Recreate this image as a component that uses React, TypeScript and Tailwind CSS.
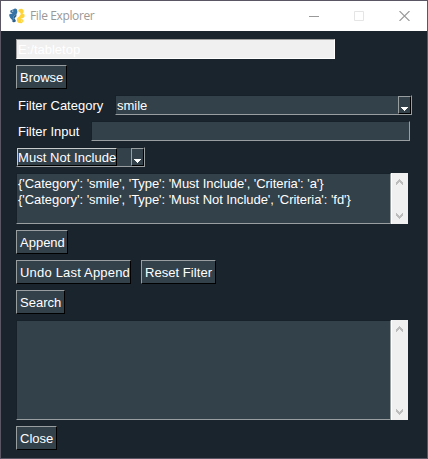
import type { ReactNode } from "react";

const sunken = "border border-t-[#17212a] border-l-[#17212a] border-r-[#999ea1] border-b-[#999ea1] bg-[#33414b]";

function Button({ children, width }: { children: ReactNode; width: string }) {
  return (
    <button
      className={`flex h-6 shrink-0 items-start whitespace-nowrap border border-t-[#999ea1] border-l-[#999ea1] border-r-black border-b-black bg-[#33414b] pl-[3px] text-left leading-[23px] ${width}`}
    >
      {children}
    </button>
  );
}

function DropArrow() {
  return (
    <span className="ml-auto flex h-[18px] w-[13px] shrink-0 items-end justify-center border border-t-[#999ea1] border-l-[#999ea1] border-r-black border-b-black bg-[#33414b] pb-[2px]">
      <svg width="7" height="4" viewBox="0 0 7 4" shapeRendering="crispEdges">
        <path d="M0 0h7v1H6v1H5v1H4v1H3V3H2V2H1V1H0z" fill="white" />
      </svg>
    </span>
  );
}

function ScrollBar() {
  return (
    <div className="flex w-[17px] flex-col items-center justify-between border-l border-white bg-[#f0f0f0] pb-[5px] pt-[6px] pr-px">
      <svg width="7" height="6" viewBox="0 0 7 6" shapeRendering="crispEdges">
        <path d="M3 0h1v1h1v1h1v1h1v3H6V5H5V4H4V3H3v1H2v1H1v1H0V3h1V2h1V1h1z" fill="#bdbdbd" />
      </svg>
      <svg width="7" height="6" viewBox="0 0 7 6" shapeRendering="crispEdges">
        <path d="M3 6h1V5h1V4h1V3h1V0H6v1H5v1H4v1H3V2H2V1H1V0H0v3h1v1h1v1h1z" fill="#bdbdbd" />
      </svg>
    </div>
  );
}

function ListBox({ lines, height }: { lines: string[]; height: string }) {
  return (
    <div className={`flex shrink-0 ${height}`}>
      <div className={`w-[375px] pl-px pt-[2px] leading-4 tracking-[-0.05px] ${sunken}`}>
        {lines.map((line) => (
          <div key={line} className="whitespace-pre">
            {line}
          </div>
        ))}
      </div>
      <ScrollBar />
    </div>
  );
}

function Logo() {
  return (
    <svg width="16" height="16" viewBox="0 0 16 16">
      <path
        d="M4.5 1.2Q6.2-.3 8 1.4L8.4 4 7.5 6.2 4.2 8.6 4 10.5 5 12 3.2 11.9 1.3 10 .2 7.8.5 6 3.6 5.4 1.2 4.3 1.4 2.6z"
        fill="#3572a5"
      />
      <path
        d="M10.5.9 13 .8 14.7 2.4 14.6 4.5 13.5 5.5 15.5 6.5 15.6 8.4 14.2 10.1 11.6 10.8 14.4 11.7 14.5 13.5 12.6 15.2 9.7 15.1 8 13.3 7.8 10.5 10.3 8.2 11.8 6.3 11.2 4.4 9.6 3.8 9.3 2z"
        fill="#ffd43b"
      />
      <path d="M4.2 8.6 7.5 6.2 7.4 8.3 5.5 10.4 6.8 12.3 6.4 14 4.2 14.2 2.7 12.8 4.4 12z" fill="#2d618d" />
      <path d="M3 2.5h1.3v1.2H3z" fill="#b4cee2" />
      <path d="M12 12.5h1.3v1.2H12z" fill="#fff0ad" />
    </svg>
  );
}

export default function App() {
  return (
    <div className="flex h-[459px] w-[428px] flex-col overflow-hidden border border-[#5b5664] bg-[#1a242d] font-['Liberation_Sans',Arial,sans-serif] text-[13px] text-white">
      <header className="flex h-[30px] shrink-0 items-center bg-white">
        <div className="mb-px ml-2 flex">
          <Logo />
        </div>
        <h1 className="ml-[5px] font-['Open_Sans',sans-serif] text-[12px] tracking-[-0.37px] text-[#999999]">
          File Explorer
        </h1>
        <div className="mb-px ml-auto mr-[17px] flex items-center gap-[35px] text-[#999999]">
          <svg width="10" height="10" viewBox="0 0 10 10" shapeRendering="crispEdges">
            <path d="M0 5h10v1H0z" fill="currentColor" />
          </svg>
          <svg width="10" height="10" viewBox="0 0 10 10">
            <path d="M.5.5h9v9h-9z" fill="none" stroke="#e5e5e5" />
          </svg>
          <svg width="11" height="10" viewBox="0 0 11 10">
            <path d="M.5 0 10.5 10M10.5 0 .5 10" stroke="currentColor" strokeWidth="1.1" />
          </svg>
        </div>
      </header>

      <main className="flex flex-col items-start gap-[6px] pl-[15px] pt-2">
        <div className="h-5 w-[319px] border border-t-[#a0a0a0] border-l-[#a0a0a0] border-r-white border-b-white bg-[#f0f0f0] pl-[1px] leading-[19px]">
          E:/tabletop
        </div>
        <Button width="w-[51px]">Browse</Button>
        <div className="flex h-5">
          <label className="w-[99px] pl-[2px] leading-[21px]">Filter Category</label>
          <div className={`flex w-[297px] pl-[1px] leading-[19px] ${sunken}`}>
            smile
            <DropArrow />
          </div>
        </div>
        <div className="flex h-5">
          <label className="w-[75px] pl-[2px] leading-[21px]">Filter Input</label>
          <div className={`w-[319px] ${sunken}`} />
        </div>
        <div className={`flex h-5 w-[129px] ${sunken}`}>
          <span className="h-[18px] w-[100px] whitespace-nowrap border border-t-[#c9cccd] border-l-[#c9cccd] border-r-black border-b-black leading-[17px] tracking-[0.05px]">
            Must Not Include
          </span>
          <DropArrow />
        </div>
        <ListBox
          height="h-[51px]"
          lines={[
            "{'Category': 'smile', 'Type': 'Must Include', 'Criteria': 'a'}",
            "{'Category': 'smile', 'Type': 'Must Not Include', 'Criteria': 'fd'}",
          ]}
        />
        <Button width="w-[52px]">Append</Button>
        <div className="flex gap-[10px]">
          <Button width="w-[115px] tracking-[0.19px]">Undo Last Append</Button>
          <Button width="w-[75px] tracking-[0.05px]">Reset Filter</Button>
        </div>
        <Button width="w-[49px]">Search</Button>
        <ListBox height="h-[100px]" lines={[]} />
        <Button width="w-[41px]">Close</Button>
      </main>
    </div>
  );
}
